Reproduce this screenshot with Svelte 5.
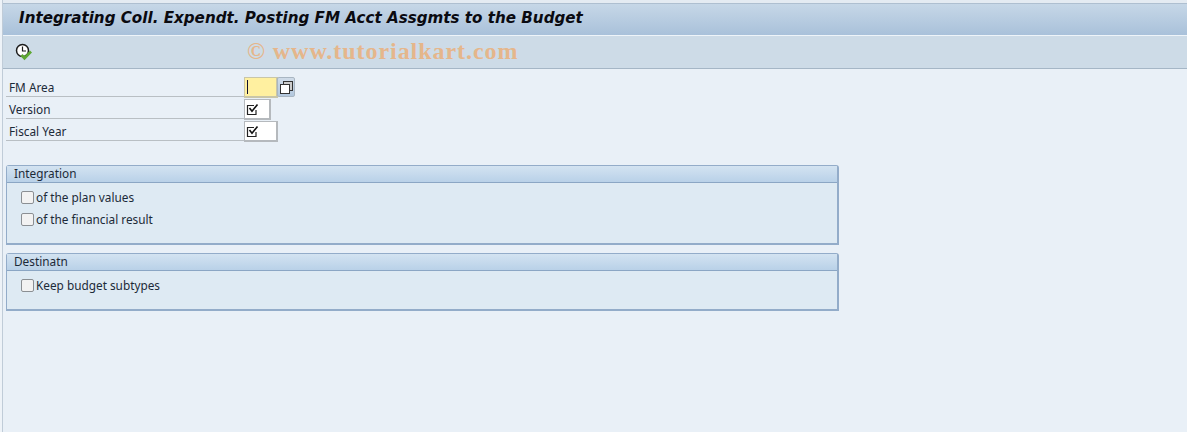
<script lang="ts">
	const params = [
		{ label: 'FM Area', kind: 'focus', width: 34 },
		{ label: 'Version', kind: 'check', width: 27 },
		{ label: 'Fiscal Year', kind: 'check', width: 34 }
	];

	const groups = [
		{ title: 'Integration', options: ['of the plan values', 'of the financial result'], tall: true },
		{ title: 'Destinatn', options: ['Keep budget subtypes'], tall: false }
	];
</script>

<div class="screen">
	<header class="title-bar">
		<h1>Integrating Coll. Expendt. Posting FM Acct Assgmts to the Budget</h1>
	</header>

	<div class="toolbar">
		<button class="exec" aria-label="Execute">
			<svg width="18" height="18" viewBox="0 0 18 18" fill="none">
				<circle cx="7.5" cy="7.5" r="6" fill="#fff" stroke="#1c1c1c" stroke-width="1.5" />
				<path d="M7.5 3.5v4.5h3.5" stroke="#1c1c1c" stroke-width="1.2" />
				<path d="M6.5 12l3 3.2 6.5-6.7" stroke="#5ea832" stroke-width="2.8" />
			</svg>
		</button>
		<span class="watermark">© www.tutorialkart.com</span>
	</div>

	<main class="content">
		<section class="params">
			{#each params as p}
				<div class="row">
					<span class="label">{p.label}</span>
					<span class="field" class:focus={p.kind === 'focus'} style="width: {p.width}px">
						{#if p.kind === 'focus'}
							<i class="caret"></i>
						{:else}
							<svg width="13" height="13" viewBox="0 0 13 13" fill="none">
								<path d="M10 7v4.5H1.5v-9H8" stroke="#222" stroke-width="1.2" />
								<path d="M3.5 5l2.5 3.2 5.5-6.7" stroke="#111" stroke-width="1.6" />
							</svg>
						{/if}
					</span>
					{#if p.kind === 'focus'}
						<button class="multi" aria-label="Multiple selection">
							<svg width="13" height="13" viewBox="0 0 13 13" fill="none">
								<rect x="3.5" y="0.5" width="9" height="9" fill="#ccc" stroke="#333" />
								<rect x="0.5" y="3.5" width="9" height="9" fill="#fff" stroke="#333" />
							</svg>
						</button>
					{/if}
				</div>
			{/each}
		</section>

		{#each groups as g}
			<section class="group" class:tall={g.tall}>
				<div class="group-head">{g.title}</div>
				<div class="group-body">
					{#each g.options as o}
						<label class="option">
							<span class="box"></span>
							<span>{o}</span>
						</label>
					{/each}
				</div>
			</section>
		{/each}
	</main>
</div>

<style>
	:global(body) {
		margin: 0;
		background: #eef3f8;
	}

	.screen {
		height: 432px;
		overflow: hidden;
		margin-left: 2px;
		border-left: 1px solid #c0ccd8;
		background: #e9f0f7;
		font-family: 'Noto Sans', 'Open Sans', sans-serif;
		color: #1c2a38;
	}

	.title-bar {
		box-sizing: border-box;
		height: 36px;
		padding-top: 3px;
		background: #e4ebf2;
		border-bottom: 1px solid #eef4f9;
	}

	h1 {
		margin: 0;
		height: 32px;
		padding: 5px 0 0 16px;
		box-sizing: border-box;
		font-family: 'DejaVu Sans', sans-serif;
		font-size: 15.15px;
		line-height: 18px;
		font-weight: 700;
		font-style: italic;
		color: #0a0a10;
		white-space: nowrap;
		background: linear-gradient(#c6d7e7, #a9c1da);
		border-top: 1px solid #aebfd0;
	}

	.toolbar {
		display: flex;
		align-items: center;
		height: 32px;
		background: #cddbe7;
		border-bottom: 1px solid #a5b6c6;
		position: relative;
	}

	.exec {
		display: flex;
		margin-left: 12px;
		padding: 0;
		border: 0;
		background: none;
	}

	.watermark {
		position: absolute;
		left: 244px;
		top: 2px;
		font-family: 'Liberation Serif', serif;
		font-size: 24px;
		font-weight: 700;
		letter-spacing: 0.95px;
		color: #e5b68b;
		white-space: nowrap;
	}

	.content {
		padding: 8px 0 0 3px;
	}

	.params {
		display: flex;
		flex-direction: column;
	}

	.row {
		display: flex;
		height: 22px;
	}

	.row:last-child {
		margin-bottom: 14px;
	}

	.label {
		width: 235px;
		height: 19px;
		padding: 0 0 0 3px;
		font-size: 11.8px;
		line-height: 20px;
		border-bottom: 1px solid #b9bfc4;
	}

	.field {
		display: flex;
		align-items: center;
		box-sizing: border-box;
		height: 21px;
		padding-left: 1px;
		background: #fff;
		border: 1px solid #b5b9bd;
		border-width: 1px 2px 2px 1px;
	}

	.field.focus {
		background: #fff0a0;
		border-color: #c9c6a8;
	}

	.caret {
		width: 1px;
		height: 14px;
		margin-left: 1px;
		background: #101030;
	}

	.multi {
		display: flex;
		align-items: center;
		justify-content: center;
		box-sizing: border-box;
		width: 18px;
		height: 20px;
		padding: 0;
		background: linear-gradient(#cfdbe8, #b3c8de);
		border: 1px solid #a9b6c2;
		border-radius: 2px;
		margin-left: -1px;
	}

	.group {
		width: 833px;
		box-sizing: border-box;
		height: 58px;
		margin-top: 8px;
		background: #deeaf3;
		border: 1px solid #93acc9;
		border-width: 1px 2px 2px 1px;
		border-radius: 3px 3px 0 0;
	}

	.group.tall {
		height: 80px;
	}

	.group-head {
		box-sizing: border-box;
		height: 17px;
		padding-left: 7px;
		font-size: 11.8px;
		line-height: 15px;
		background: linear-gradient(#d3e3f1, #b9d1e8);
		border-bottom: 1px solid #8ba6c4;
	}

	.group-body {
		padding: 3px 0 0 14px;
	}

	.option {
		display: flex;
		align-items: center;
		gap: 2px;
		height: 22px;
		font-size: 11.8px;
	}

	.box {
		box-sizing: border-box;
		width: 13px;
		height: 13px;
		background: #f2f2f2;
		border: 1px solid #8b8f93;
		border-radius: 2px;
	}
</style>
